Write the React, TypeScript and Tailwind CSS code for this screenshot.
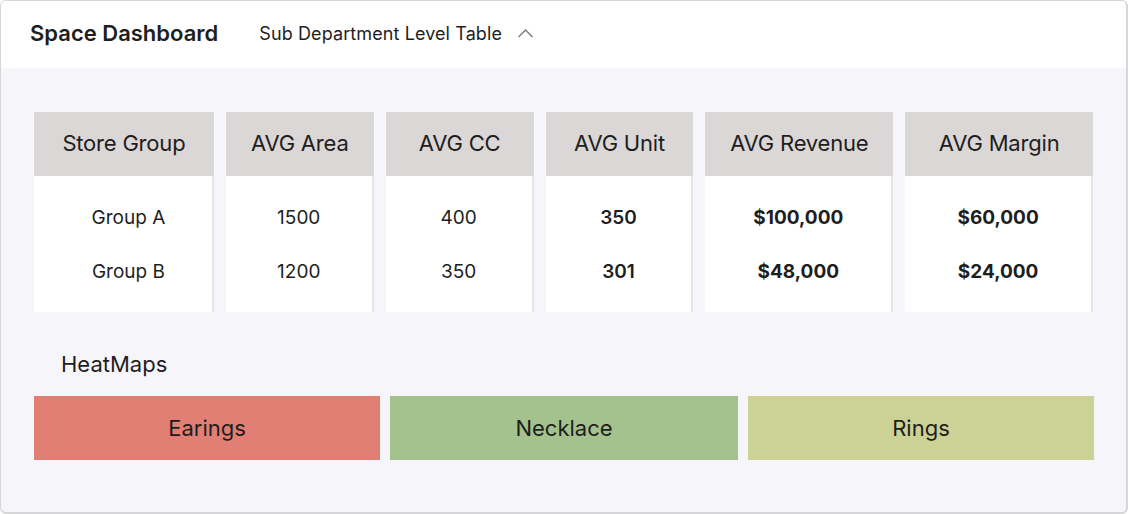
import React from "react";

type Col = { title: string; width: string; values: [string, string]; bold?: "semibold" | "bold"; pad?: string };

const cols: Col[] = [
  { title: "Store Group", width: "w-[180px]", values: ["Group A", "Group B"], pad: "pl-[11px]" },
  { title: "AVG Area", width: "w-[148px]", values: ["1500", "1200"] },
  { title: "AVG CC", width: "w-[148px]", values: ["400", "350"] },
  { title: "AVG Unit", width: "w-[148px]", values: ["350", "301"], bold: "semibold" },
  { title: "AVG Revenue", width: "w-[188px]", values: ["$100,000", "$48,000"], bold: "bold" },
  { title: "AVG Margin", width: "w-[188px]", values: ["$60,000", "$24,000"], bold: "bold" },
];

export default function App() {
  return (
    <div className="h-[514px] w-[1128px] overflow-hidden rounded-md border border-b-2 border-r-2 border-[#d6d6d8] bg-[#f6f5fa] font-['Inter',sans-serif] text-[#1e1e1e]">
      <div className="flex h-[67px] items-center bg-white pb-[3px] pl-[29px]">
        <span className="text-[22px] font-semibold">Space Dashboard</span>
        <span className="ml-[41px] text-[18px] tracking-[0.1px]">Sub Department Level Table</span>
        <svg className="ml-[15px]" width="17" height="12" viewBox="0 0 17 12" fill="none">
          <polyline points="1.5,10 8.5,3 15.5,10" stroke="#7a7a7a" strokeWidth="1.4" />
        </svg>
      </div>
      <div className="px-[33px] pt-[44px]">
        <div className="flex gap-3">
          {cols.map((c) => (
            <div key={c.title} className={c.width}>
              <div className="flex h-16 items-center justify-center bg-[#dad7d6] pb-[2px] text-[22px] tracking-[-0.2px]">
                {c.title}
              </div>
              <div
                className={
                  "flex h-[136px] flex-col items-center border-r-2 border-[#e4e3e8] bg-white pt-[15px] " + (c.pad ?? "")
                }
              >
                {c.values.map((v) => (
                  <div
                    key={v}
                    className={
                      "flex h-[54px] items-center text-[19px] " +
                      (c.bold === "bold" ? "font-bold" : c.bold === "semibold" ? "font-semibold" : "")
                    }
                  >
                    {v}
                  </div>
                ))}
              </div>
            </div>
          ))}
        </div>
        <div className="mt-[37px] pl-[27px] text-[22px] leading-[30px]">HeatMaps</div>
        <div className="mt-[17px] grid w-[1060px] grid-cols-[346px_348px_346px] gap-[10px]">
          <div className="flex h-16 items-center justify-center bg-[#e27f74] text-[22px]">Earings</div>
          <div className="flex h-16 items-center justify-center bg-[#a3c28d] text-[22px]">Necklace</div>
          <div className="flex h-16 items-center justify-center bg-[#ccd294] text-[22px]">Rings</div>
        </div>
      </div>
    </div>
  );
}
